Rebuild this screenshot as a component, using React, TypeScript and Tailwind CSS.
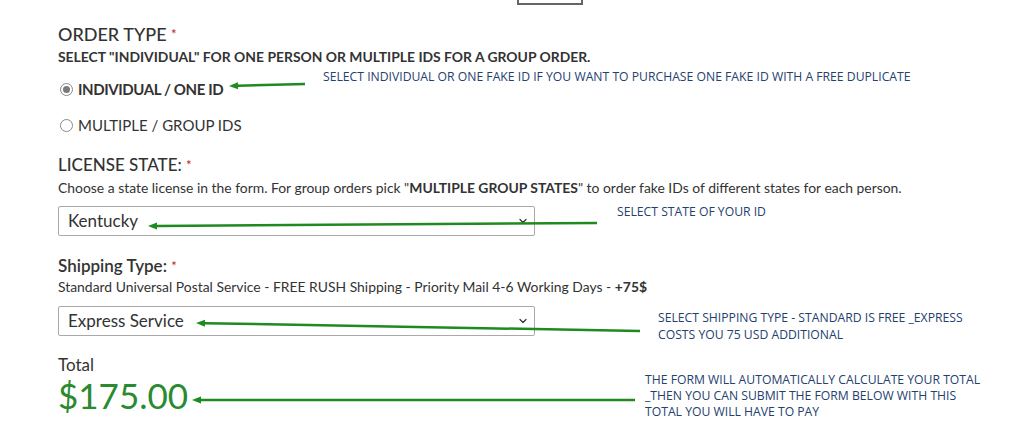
import React from "react";
import { ChevronDown } from "lucide-react";

type Arrow = { x1: number; y1: number; x2: number; y2: number };

const arrows: Arrow[] = [
  { x1: 305, y1: 84, x2: 229, y2: 86 },
  { x1: 597, y1: 223, x2: 148, y2: 226 },
  { x1: 640, y1: 331, x2: 196, y2: 323 },
  { x1: 635, y1: 400, x2: 192, y2: 400 },
];

function ArrowHead({ x1, y1, x2, y2 }: Arrow) {
  const a = Math.atan2(y2 - y1, x2 - x1);
  const len = 9;
  const half = 3.5;
  const bx = x2 - Math.cos(a) * len;
  const by = y2 - Math.sin(a) * len;
  const px = -Math.sin(a) * half;
  const py = Math.cos(a) * half;
  return (
    <g>
      <line x1={x1} y1={y1} x2={bx} y2={by} stroke="#1f8a1f" strokeWidth={2.5} />
      <polygon points={`${x2},${y2} ${bx + px},${by + py} ${bx - px},${by - py}`} fill="#1f8a1f" />
    </g>
  );
}

function Radio({ checked }: { checked?: boolean }) {
  return (
    <span className="w-[13px] h-[13px] rounded-full border border-[#8a8a8a] bg-white flex items-center justify-center shrink-0">
      {checked && <span className="w-[7px] h-[7px] rounded-full bg-[#7a7a7a]" />}
    </span>
  );
}

function Select({ value }: { value: string }) {
  return (
    <div className="w-[477px] h-[30px] border border-[#a9a9a9] rounded-[2px] bg-white flex items-center justify-between pl-[9px] pr-[5px]">
      <span className="text-[17px] text-[#333]">{value}</span>
      <ChevronDown className="w-[12px] h-[12px] text-[#333]" strokeWidth={2.5} />
    </div>
  );
}

export default function App() {
  return (
    <div className="relative w-[1024px] h-[425px] bg-white overflow-hidden font-['Lato','Liberation_Sans',sans-serif] text-[#333]">
      <div className="absolute left-[517px] top-[-4px] w-[66px] h-[9px] border-2 border-[#666]" />

      <div className="pl-[58px] pt-[24px]">
        <h2 className="text-[18px] leading-[20px] font-medium text-[#333]">
          ORDER TYPE <span className="text-[#b22] text-[13px] align-top">*</span>
        </h2>
        <p className="mt-[5px] text-[13.9px] leading-[16px] font-bold text-[#333]">
          SELECT "INDIVIDUAL" FOR ONE PERSON OR MULTIPLE IDS FOR A GROUP ORDER.
        </p>
        <div className="mt-[14px] flex items-center gap-[5px] ml-[2px]">
          <Radio checked />
          <span className="text-[15px] leading-[20px] font-bold tracking-[-0.4px] text-[#333]">INDIVIDUAL / ONE ID</span>
        </div>
        <div className="mt-[16px] flex items-center gap-[5px] ml-[2px]">
          <Radio />
          <span className="text-[15px] leading-[20px] text-[#333]">MULTIPLE / GROUP IDS</span>
        </div>

        <h2 className="mt-[20px] text-[17px] leading-[20px] font-medium">
          LICENSE STATE: <span className="text-[#b22] text-[13px] align-top">*</span>
        </h2>
        <p className="mt-[5px] text-[13.9px] leading-[16px]">
          Choose a state license in the form. For group orders pick "<b>MULTIPLE GROUP STATES</b>" to order fake IDs of different states for each person.
        </p>
        <div className="mt-[10px]">
          <Select value="Kentucky" />
        </div>

        <h2 className="mt-[20px] text-[17px] leading-[20px] font-semibold">
          Shipping Type: <span className="text-[#b22] text-[13px] align-top font-normal">*</span>
        </h2>
        <p className="mt-[3px] text-[13.9px] leading-[16px]">
          Standard Universal Postal Service - FREE RUSH Shipping - Priority Mail 4-6 Working Days - <b>+75$</b>
        </p>
        <div className="mt-[11px]">
          <Select value="Express Service" />
        </div>

        <div className="mt-[20px] text-[17px] leading-[18px]">Total</div>
        <div className="text-[35px] leading-[42px] text-[#2a8a2f]">$175.00</div>
      </div>

      <svg className="absolute inset-0 pointer-events-none" width={1024} height={425}>
        {arrows.map((a, i) => (
          <ArrowHead key={i} {...a} />
        ))}
      </svg>

      <div className="absolute inset-0 font-['Open_Sans','DejaVu_Sans',sans-serif] text-[12.2px] leading-[16px] text-[#23406e] pointer-events-none">
        <div className="absolute left-[323px] top-[69px] whitespace-nowrap">
          SELECT INDIVIDUAL OR ONE FAKE ID IF YOU WANT TO PURCHASE ONE FAKE ID WITH A FREE DUPLICATE
        </div>
        <div className="absolute left-[617px] top-[204px] whitespace-nowrap">SELECT STATE OF YOUR ID</div>
        <div className="absolute left-[658px] top-[309px] leading-[17px] whitespace-nowrap">
          SELECT SHIPPING TYPE - STANDARD IS FREE _EXPRESS
          <br />
          COSTS YOU 75 USD ADDITIONAL
        </div>
        <div className="absolute left-[645px] top-[372px] whitespace-nowrap">
          THE FORM WILL AUTOMATICALLY CALCULATE YOUR TOTAL
          <br />
          _THEN YOU CAN SUBMIT THE FORM BELOW WITH THIS
          <br />
          TOTAL YOU WILL HAVE TO PAY
        </div>
      </div>
    </div>
  );
}
